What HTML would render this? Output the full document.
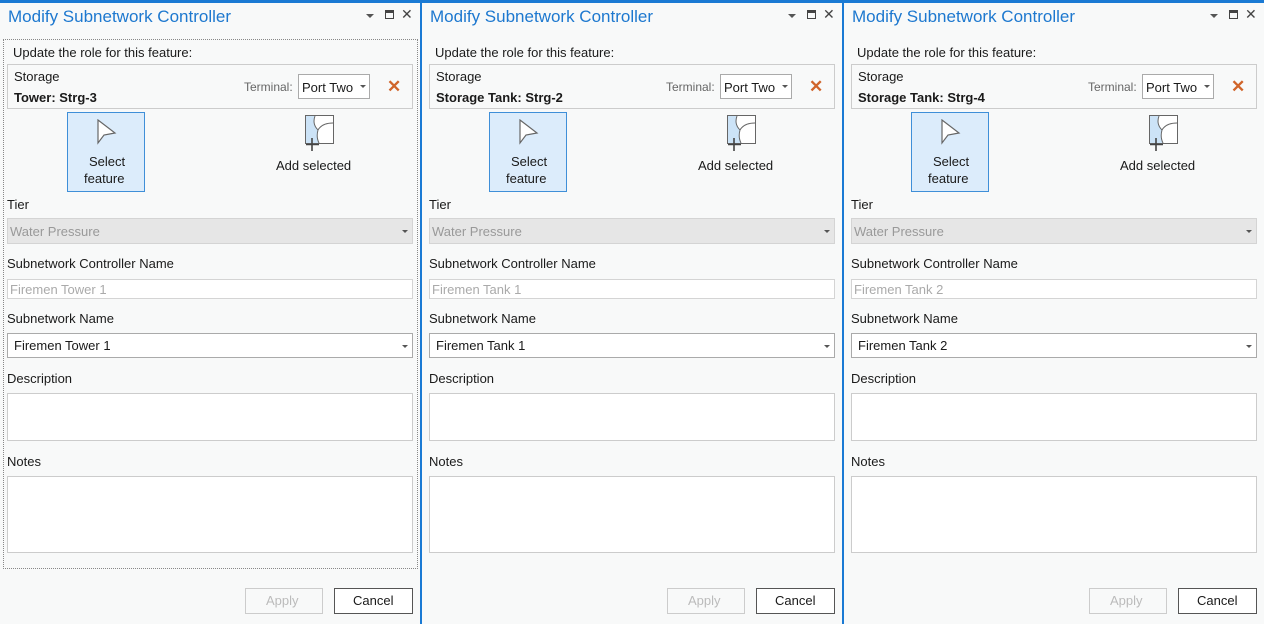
<!DOCTYPE html>
<html><head><meta charset="utf-8"><style>
*{box-sizing:border-box;margin:0;padding:0}
body{width:1264px;height:624px;overflow:hidden;background:#f8f9f9;font-family:"Liberation Sans",sans-serif;font-size:13px;color:#1a1a1a;position:relative}
.p{position:absolute;top:0;width:420px;height:624px;background:#f8f9f9}
.a{position:absolute;white-space:nowrap}
.title{left:8px;top:7px;font-size:17px;color:#1d78cf}
.box{position:absolute;border:1px solid #ccc;background:#fff}
.dd{position:absolute;width:0;height:0;border-left:3px solid transparent;border-right:3px solid transparent;border-top:3px solid #555}
.vb{position:absolute;top:0;width:2px;height:624px;background:#1a7ad4}
.cl{left:401px;top:6px;font-size:14px;color:#444}
</style></head><body>
<div style="position:absolute;left:0;top:0;width:1264px;height:3px;background:#1a7ad4;z-index:5"></div>
<div class="vb" style="left:420px"></div>
<div class="vb" style="left:842px"></div>

<div class="p" style="left:0">
 <div style="position:absolute;left:3px;top:39px;width:415px;height:530px;border:1px dotted #888"></div>
 <div class="a title">Modify Subnetwork Controller</div>
 <div class="dd" style="left:366px;top:14px;border-left-width:4px;border-right-width:4px;border-top-width:4px"></div>
 <div style="position:absolute;left:385px;top:10px;width:9px;height:9px;border:1px solid #444;border-top-width:3px"></div>
 <div class="a cl">✕</div>
 <div class="a" style="left:13px;top:45px">Update the role for this feature:</div>
 <div class="box" style="left:7px;top:64px;width:406px;height:45px;background:#f8f9f9"></div>
 <div class="a" style="left:14px;top:69px">Storage</div>
 <div class="a" style="left:14px;top:90px;font-weight:bold">Tower: Strg-3</div>
 <div class="a" style="left:244px;top:80px;font-size:12px;color:#666">Terminal:</div>
 <div class="box" style="left:298px;top:74px;width:72px;height:25px;border-color:#aaa"></div>
 <div class="a" style="left:302px;top:80px">Port Two</div>
 <div class="dd" style="left:360px;top:85px"></div>
 <div class="a" style="left:387px;top:77px;font-size:17px;color:#d0642a;font-weight:bold">✕</div>
 <div style="position:absolute;left:67px;top:112px;width:78px;height:80px;background:#dcecfb;border:1px solid #3f8fd8"></div>
 <svg style="position:absolute;left:96px;top:119px" width="24" height="28"><path d="M2 1 L2 24 L8 16 L19 14 Z" fill="#fff" stroke="#666" stroke-width="1.2"/></svg>
 <div class="a" style="left:89px;top:154px">Select</div>
 <div class="a" style="left:84px;top:171px">feature</div>
 <svg style="position:absolute;left:302px;top:114px" width="34" height="38"><rect x="3.5" y="1.5" width="28" height="28" fill="#fff" stroke="#666"/><path d="M4 2 L13 2 Q10 10 16 16 Q14 23 17 29 L4 29 Z" fill="#cce3f7"/><path d="M13 2 Q10 10 16 16 Q14 23 17 29 M16 16 Q20 9 31 9" fill="none" stroke="#666"/><path d="M10 24 V37 M4 30.5 H17" stroke="#444" stroke-width="1.6"/></svg>
 <div class="a" style="left:276px;top:158px">Add selected</div>
 <div class="a" style="left:7px;top:197px">Tier</div>
 <div class="box" style="left:7px;top:218px;width:406px;height:26px;background:#e6e6e6;border-color:#d4d4d4"></div>
 <div class="a" style="left:10px;top:224px;color:#999">Water Pressure</div>
 <div class="dd" style="left:402px;top:230px"></div>
 <div class="a" style="left:7px;top:256px">Subnetwork Controller Name</div>
 <div class="box" style="left:7px;top:279px;width:406px;height:20px;border-color:#d4d4d4"></div>
 <div class="a" style="left:10px;top:282px;color:#aaa">Firemen Tower 1</div>
 <div class="a" style="left:7px;top:311px">Subnetwork Name</div>
 <div class="box" style="left:7px;top:333px;width:406px;height:25px;border-color:#aaa"></div>
 <div class="a" style="left:14px;top:338px">Firemen Tower 1</div>
 <div class="dd" style="left:402px;top:345px"></div>
 <div class="a" style="left:7px;top:371px">Description</div>
 <div class="box" style="left:7px;top:393px;width:406px;height:48px"></div>
 <div class="a" style="left:7px;top:454px">Notes</div>
 <div class="box" style="left:7px;top:476px;width:406px;height:77px"></div>
 <div class="box" style="left:245px;top:588px;width:78px;height:26px;background:#f8f9f9;border-color:#ccc"></div>
 <div class="a" style="left:266px;top:593px;color:#bbb">Apply</div>
 <div class="box" style="left:334px;top:588px;width:79px;height:26px;border-color:#555"></div>
 <div class="a" style="left:353px;top:593px">Cancel</div>
</div>

<div class="p" style="left:422px;width:420px">
 <div class="a title">Modify Subnetwork Controller</div>
 <div class="dd" style="left:366px;top:14px;border-left-width:4px;border-right-width:4px;border-top-width:4px"></div>
 <div style="position:absolute;left:385px;top:10px;width:9px;height:9px;border:1px solid #444;border-top-width:3px"></div>
 <div class="a cl">✕</div>
 <div class="a" style="left:13px;top:45px">Update the role for this feature:</div>
 <div class="box" style="left:7px;top:64px;width:406px;height:45px;background:#f8f9f9"></div>
 <div class="a" style="left:14px;top:69px">Storage</div>
 <div class="a" style="left:14px;top:90px;font-weight:bold">Storage Tank: Strg-2</div>
 <div class="a" style="left:244px;top:80px;font-size:12px;color:#666">Terminal:</div>
 <div class="box" style="left:298px;top:74px;width:72px;height:25px;border-color:#aaa"></div>
 <div class="a" style="left:302px;top:80px">Port Two</div>
 <div class="dd" style="left:360px;top:85px"></div>
 <div class="a" style="left:387px;top:77px;font-size:17px;color:#d0642a;font-weight:bold">✕</div>
 <div style="position:absolute;left:67px;top:112px;width:78px;height:80px;background:#dcecfb;border:1px solid #3f8fd8"></div>
 <svg style="position:absolute;left:96px;top:119px" width="24" height="28"><path d="M2 1 L2 24 L8 16 L19 14 Z" fill="#fff" stroke="#666" stroke-width="1.2"/></svg>
 <div class="a" style="left:89px;top:154px">Select</div>
 <div class="a" style="left:84px;top:171px">feature</div>
 <svg style="position:absolute;left:302px;top:114px" width="34" height="38"><rect x="3.5" y="1.5" width="28" height="28" fill="#fff" stroke="#666"/><path d="M4 2 L13 2 Q10 10 16 16 Q14 23 17 29 L4 29 Z" fill="#cce3f7"/><path d="M13 2 Q10 10 16 16 Q14 23 17 29 M16 16 Q20 9 31 9" fill="none" stroke="#666"/><path d="M10 24 V37 M4 30.5 H17" stroke="#444" stroke-width="1.6"/></svg>
 <div class="a" style="left:276px;top:158px">Add selected</div>
 <div class="a" style="left:7px;top:197px">Tier</div>
 <div class="box" style="left:7px;top:218px;width:406px;height:26px;background:#e6e6e6;border-color:#d4d4d4"></div>
 <div class="a" style="left:10px;top:224px;color:#999">Water Pressure</div>
 <div class="dd" style="left:402px;top:230px"></div>
 <div class="a" style="left:7px;top:256px">Subnetwork Controller Name</div>
 <div class="box" style="left:7px;top:279px;width:406px;height:20px;border-color:#d4d4d4"></div>
 <div class="a" style="left:10px;top:282px;color:#aaa">Firemen Tank 1</div>
 <div class="a" style="left:7px;top:311px">Subnetwork Name</div>
 <div class="box" style="left:7px;top:333px;width:406px;height:25px;border-color:#aaa"></div>
 <div class="a" style="left:14px;top:338px">Firemen Tank 1</div>
 <div class="dd" style="left:402px;top:345px"></div>
 <div class="a" style="left:7px;top:371px">Description</div>
 <div class="box" style="left:7px;top:393px;width:406px;height:48px"></div>
 <div class="a" style="left:7px;top:454px">Notes</div>
 <div class="box" style="left:7px;top:476px;width:406px;height:77px"></div>
 <div class="box" style="left:245px;top:588px;width:78px;height:26px;background:#f8f9f9;border-color:#ccc"></div>
 <div class="a" style="left:266px;top:593px;color:#bbb">Apply</div>
 <div class="box" style="left:334px;top:588px;width:79px;height:26px;border-color:#555"></div>
 <div class="a" style="left:353px;top:593px">Cancel</div>
</div>

<div class="p" style="left:844px">
 <div class="a title">Modify Subnetwork Controller</div>
 <div class="dd" style="left:366px;top:14px;border-left-width:4px;border-right-width:4px;border-top-width:4px"></div>
 <div style="position:absolute;left:385px;top:10px;width:9px;height:9px;border:1px solid #444;border-top-width:3px"></div>
 <div class="a cl">✕</div>
 <div class="a" style="left:13px;top:45px">Update the role for this feature:</div>
 <div class="box" style="left:7px;top:64px;width:406px;height:45px;background:#f8f9f9"></div>
 <div class="a" style="left:14px;top:69px">Storage</div>
 <div class="a" style="left:14px;top:90px;font-weight:bold">Storage Tank: Strg-4</div>
 <div class="a" style="left:244px;top:80px;font-size:12px;color:#666">Terminal:</div>
 <div class="box" style="left:298px;top:74px;width:72px;height:25px;border-color:#aaa"></div>
 <div class="a" style="left:302px;top:80px">Port Two</div>
 <div class="dd" style="left:360px;top:85px"></div>
 <div class="a" style="left:387px;top:77px;font-size:17px;color:#d0642a;font-weight:bold">✕</div>
 <div style="position:absolute;left:67px;top:112px;width:78px;height:80px;background:#dcecfb;border:1px solid #3f8fd8"></div>
 <svg style="position:absolute;left:96px;top:119px" width="24" height="28"><path d="M2 1 L2 24 L8 16 L19 14 Z" fill="#fff" stroke="#666" stroke-width="1.2"/></svg>
 <div class="a" style="left:89px;top:154px">Select</div>
 <div class="a" style="left:84px;top:171px">feature</div>
 <svg style="position:absolute;left:302px;top:114px" width="34" height="38"><rect x="3.5" y="1.5" width="28" height="28" fill="#fff" stroke="#666"/><path d="M4 2 L13 2 Q10 10 16 16 Q14 23 17 29 L4 29 Z" fill="#cce3f7"/><path d="M13 2 Q10 10 16 16 Q14 23 17 29 M16 16 Q20 9 31 9" fill="none" stroke="#666"/><path d="M10 24 V37 M4 30.5 H17" stroke="#444" stroke-width="1.6"/></svg>
 <div class="a" style="left:276px;top:158px">Add selected</div>
 <div class="a" style="left:7px;top:197px">Tier</div>
 <div class="box" style="left:7px;top:218px;width:406px;height:26px;background:#e6e6e6;border-color:#d4d4d4"></div>
 <div class="a" style="left:10px;top:224px;color:#999">Water Pressure</div>
 <div class="dd" style="left:402px;top:230px"></div>
 <div class="a" style="left:7px;top:256px">Subnetwork Controller Name</div>
 <div class="box" style="left:7px;top:279px;width:406px;height:20px;border-color:#d4d4d4"></div>
 <div class="a" style="left:10px;top:282px;color:#aaa">Firemen Tank 2</div>
 <div class="a" style="left:7px;top:311px">Subnetwork Name</div>
 <div class="box" style="left:7px;top:333px;width:406px;height:25px;border-color:#aaa"></div>
 <div class="a" style="left:14px;top:338px">Firemen Tank 2</div>
 <div class="dd" style="left:402px;top:345px"></div>
 <div class="a" style="left:7px;top:371px">Description</div>
 <div class="box" style="left:7px;top:393px;width:406px;height:48px"></div>
 <div class="a" style="left:7px;top:454px">Notes</div>
 <div class="box" style="left:7px;top:476px;width:406px;height:77px"></div>
 <div class="box" style="left:245px;top:588px;width:78px;height:26px;background:#f8f9f9;border-color:#ccc"></div>
 <div class="a" style="left:266px;top:593px;color:#bbb">Apply</div>
 <div class="box" style="left:334px;top:588px;width:79px;height:26px;border-color:#555"></div>
 <div class="a" style="left:353px;top:593px">Cancel</div>
</div>
</body></html>
